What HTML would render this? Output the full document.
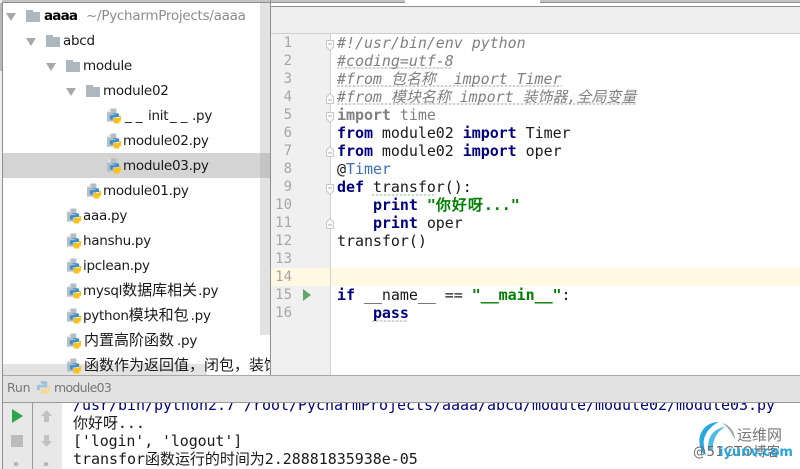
<!DOCTYPE html>
<html><head><meta charset="utf-8">
<style>
html,body{margin:0;padding:0;background:#fff}
#r{position:relative;width:800px;height:469px;overflow:hidden;background:#fff}
.b{position:absolute}
.t{position:absolute;white-space:pre;font-family:"DejaVu Sans","WenQuanYi Zen Hei",sans-serif;font-size:13.5px;line-height:20px;color:#1a1a1a;letter-spacing:-.27px}
.j{font-family:"WenQuanYi Zen Hei","Noto Sans CJK SC",sans-serif;font-size:15px;letter-spacing:0}
.c{position:absolute;left:337px;white-space:pre;font-family:"DejaVu Sans Mono","WenQuanYi Zen Hei",monospace;font-size:15px;line-height:18px;color:#1a1a1a;letter-spacing:-.05px}
.n{position:absolute;left:271px;width:21px;text-align:right;font-family:"DejaVu Sans Mono",monospace;font-size:14px;line-height:18px;color:#a6a6a6}
.k{color:#000080;font-weight:bold}
.i{color:#808080;font-style:italic}
.w{color:#808080}
.s{color:#008000;font-weight:bold}
.o{position:absolute;left:11px;white-space:pre;font-family:"DejaVu Sans Mono","WenQuanYi Zen Hei",monospace;font-size:15px;line-height:18px;color:#1a1a1a;letter-spacing:-.03px}
.tri{position:absolute;width:0;height:0;border-left:5px solid transparent;border-right:5px solid transparent;border-top:8px solid #a8a8a8}
.fd{position:absolute;width:14px;height:10px;background:#acb7bf}
.fd:before{content:"";position:absolute;left:0;top:-2px;width:7px;height:2px;background:#acb7bf}
.ul{position:absolute;height:2px;background:repeating-linear-gradient(90deg,#d4d4d4 0 2px,#f0f0f0 2px 4px)}
</style></head><body><div id="r">

<svg width="0" height="0" style="position:absolute"><defs>
<symbol id="py" viewBox="0 0 16 16">
<path d="M0 4 4 0H10V14H0Z" fill="#b4bec6"/><path d="M0 4 4 0V4Z" fill="#e4e8eb"/>
<path d="M6 5H11Q13 5 13 7V9H8Q6 9 6 11V12H5Q3 12 3 10V8Q3 7 5 7H9V6H6Z" fill="#3d8fc9"/>
<path d="M15 8V12Q15 14 13 14V16H9Q7 16 7 14V12Q7 10 9 10H13V8Z" fill="#fdc21a"/>
</symbol>
<symbol id="fdn" viewBox="0 0 8 11"><path d="M.5.5H7.5V7L4 10.5.5 7Z" fill="#fafafa" stroke="#c8c8c8"/><path d="M2 4H6" stroke="#b0b0b0"/></symbol>
<symbol id="fup" viewBox="0 0 8 11"><path d="M.5 10.5H7.5V4L4 .5.5 4Z" fill="#fafafa" stroke="#c8c8c8"/><path d="M2 7H6" stroke="#b0b0b0"/></symbol>
</defs></svg>

<!-- top -->
<div class="b" style="left:0;top:0;width:800px;height:2px;background:#c4c4c4"></div>
<div class="b" style="left:0;top:2px;width:270px;height:1px;background:#8f8f8f"></div>
<div class="b" style="left:405px;top:0;width:135px;height:3px;background:#fff"></div>
<div class="b" style="left:271px;top:3px;width:529px;height:3px;background:#fff"></div>
<div class="b" style="left:271px;top:2px;width:134px;height:1px;background:#8f8f8f"></div>
<div class="b" style="left:540px;top:2px;width:260px;height:1px;background:#8f8f8f"></div>
<div class="b" style="left:271px;top:6px;width:529px;height:1px;background:#8f8f8f"></div>
<div class="b" style="left:271px;top:7px;width:529px;height:26px;background:#eeeeee"></div>
<div class="b" style="left:271px;top:33px;width:529px;height:1px;background:#cfcfcf"></div>

<!-- left edge and splitter -->
<div class="b" style="left:0;top:0;width:2px;height:469px;background:#eeeeee"></div>
<div class="b" style="left:2px;top:2px;width:1px;height:467px;background:#8f8f8f"></div>
<div class="b" style="left:0;top:3px;width:2px;height:68px;background:#b8b8b8"></div>
<div class="b" style="left:270px;top:0;width:1px;height:375px;background:#8f8f8f"></div>

<!-- tree scrollbar -->
<div class="b" style="left:260px;top:3px;width:10px;height:332px;background:#e2e2e2"></div>
<div class="b" style="left:3px;top:153px;width:257px;height:25px;background:#d4d4d4"></div>
<div class="b" style="left:260px;top:153px;width:10px;height:25px;background:#c4c4c4"></div>
<div class="b" style="left:3px;top:364px;width:204px;height:11px;background:#e3e3e3"></div>

<!-- tree -->
<div class="tri" style="left:6px;top:13px"></div>
<div class="fd" style="left:26px;top:12px"></div>
<div class="t" style="left:44px;top:6px;font-weight:bold;color:#000;letter-spacing:-.8px">aaaa</div>
<div class="t" style="left:86px;top:6px;color:#8c8c8c">~/PycharmProjects/aaaa</div>

<div class="tri" style="left:26px;top:38px"></div>
<div class="fd" style="left:46px;top:37px"></div>
<div class="t" style="left:63px;top:31px">abcd</div>

<div class="tri" style="left:46px;top:63px"></div>
<div class="fd" style="left:66px;top:62px"></div>
<div class="t" style="left:83px;top:56px">module</div>

<div class="tri" style="left:66px;top:88px"></div>
<div class="fd" style="left:86px;top:87px"></div>
<div class="t" style="left:103px;top:81px">module02</div>

<svg class="b" style="left:107px;top:108px" width="15" height="16"><use href="#py"/></svg>
<div class="t" style="left:125px;top:106px;letter-spacing:4px">__</div>
<div class="t" style="left:148px;top:106px">init</div>
<div class="t" style="left:170px;top:106px;letter-spacing:4px">__</div>
<div class="t" style="left:192px;top:106px">.py</div>
<svg class="b" style="left:107px;top:133px" width="15" height="16"><use href="#py"/></svg>
<div class="t" style="left:123px;top:131px">module02.py</div>
<svg class="b" style="left:107px;top:158px" width="15" height="16"><use href="#py"/></svg>
<div class="t" style="left:123px;top:156px">module03.py</div>
<svg class="b" style="left:87px;top:183px" width="15" height="16"><use href="#py"/></svg>
<div class="t" style="left:103px;top:181px">module01.py</div>
<svg class="b" style="left:67px;top:208px" width="15" height="16"><use href="#py"/></svg>
<div class="t" style="left:83px;top:206px">aaa.py</div>
<svg class="b" style="left:67px;top:233px" width="15" height="16"><use href="#py"/></svg>
<div class="t" style="left:83px;top:231px">hanshu.py</div>
<svg class="b" style="left:67px;top:258px" width="15" height="16"><use href="#py"/></svg>
<div class="t" style="left:83px;top:256px">ipclean.py</div>
<svg class="b" style="left:67px;top:283px" width="15" height="16"><use href="#py"/></svg>
<div class="t" style="left:83px;top:280px">mysql<span class="j" style="margin-right:1px">数据库相关</span>.py</div>
<svg class="b" style="left:67px;top:308px" width="15" height="16"><use href="#py"/></svg>
<div class="t" style="left:83px;top:305px">python<span class="j" style="margin-right:2px">模块和包</span>.py</div>
<svg class="b" style="left:67px;top:333px" width="15" height="16"><use href="#py"/></svg>
<div class="t" style="left:84px;top:330px"><span class="j" style="margin-right:3px">内置高阶函数</span>.py</div>
<svg class="b" style="left:67px;top:358px" width="15" height="16"><use href="#py"/></svg>
<div class="t" style="left:84px;top:355px;width:186px;overflow:hidden"><span class="j">函数作为返回值，闭包，装饰器</span></div>

<!-- gutter -->
<div class="b" style="left:271px;top:34px;width:59px;height:341px;background:#f0f0f0"></div>
<div class="b" style="left:330px;top:34px;width:1px;height:341px;background:#d2d2d2"></div>
<div class="b" style="left:271px;top:268px;width:59px;height:18px;background:#fff8e3"></div>
<div class="b" style="left:331px;top:268px;width:469px;height:18px;background:#fff8e3"></div>

<div class="n" style="top:34px">1</div>
<div class="n" style="top:52px">2</div>
<div class="n" style="top:70px">3</div>
<div class="n" style="top:88px">4</div>
<div class="n" style="top:106px">5</div>
<div class="n" style="top:124px">6</div>
<div class="n" style="top:142px">7</div>
<div class="n" style="top:160px">8</div>
<div class="n" style="top:178px">9</div>
<div class="n" style="top:196px">10</div>
<div class="n" style="top:214px">11</div>
<div class="n" style="top:232px">12</div>
<div class="n" style="top:250px">13</div>
<div class="n" style="top:268px">14</div>
<div class="n" style="top:286px">15</div>
<div class="n" style="top:304px">16</div>

<svg class="b" style="left:326px;top:40px" width="8" height="11"><use href="#fdn"/></svg>
<svg class="b" style="left:326px;top:93px" width="8" height="11"><use href="#fup"/></svg>
<svg class="b" style="left:326px;top:112px" width="8" height="11"><use href="#fdn"/></svg>
<svg class="b" style="left:326px;top:146px" width="8" height="11"><use href="#fup"/></svg>
<svg class="b" style="left:326px;top:184px" width="8" height="11"><use href="#fdn"/></svg>
<svg class="b" style="left:326px;top:218px" width="8" height="11"><use href="#fup"/></svg>
<svg class="b" style="left:303px;top:288px" width="9" height="14"><path d="M0 1 8 7 0 13Z" fill="#5fa86c"/></svg>

<!-- code -->
<div class="ul" style="left:337px;top:67px;width:116px"></div>
<div class="ul" style="left:337px;top:85px;width:225px"></div>
<div class="ul" style="left:337px;top:103px;width:299px"></div>
<div class="ul" style="left:372px;top:194px;width:64px;background:repeating-linear-gradient(90deg,#c4dcc4 0 2px,#f4f8f4 2px 4px)"></div>
<div class="ul" style="left:372px;top:320px;width:36px"></div>
<div class="c i" style="top:34px">#!/usr/bin/env python</div>
<div class="c i" style="top:52px">#coding=utf-8</div>
<div class="c i" style="top:70px">#from 包名称  import Timer</div>
<div class="c i" style="top:88px">#from 模块名称 import 装饰器,全局变量</div>
<div class="c w" style="top:106px"><b>import</b> time</div>
<div class="c" style="top:124px"><span class="k">from</span> module02 <span class="k">import</span> Timer</div>
<div class="c" style="top:142px"><span class="k">from</span> module02 <span class="k">import</span> oper</div>
<div class="c" style="top:160px">@<span style="color:#3a6fb5">Timer</span></div>
<div class="c" style="top:178px"><span class="k">def</span> transfor():</div>
<div class="c" style="top:196px">    <span class="k">print</span> <span class="s">"<span style="letter-spacing:1px">你好呀</span>..."</span></div>
<div class="c" style="top:214px">    <span class="k">print</span> oper</div>
<div class="c" style="top:232px">transfor()</div>
<div class="c" style="top:286px"><span class="k">if</span> __name__ == <span class="s">"__main__"</span>:</div>
<div class="c" style="top:304px">    <span class="k">pass</span></div>

<!-- run panel -->
<div class="b" style="left:3px;top:375px;width:797px;height:1px;background:#a8a8a8"></div>
<div class="b" style="left:3px;top:376px;width:797px;height:26px;background:#e2e2e2"></div>
<div class="b" style="left:3px;top:402px;width:797px;height:1px;background:#9a9a9a"></div>
<div class="t" style="left:7px;top:378px;font-size:12.5px;color:#777;letter-spacing:-.2px">Run</div>
<svg class="b" style="left:36px;top:380px" width="15" height="15" viewBox="0 0 16 16"><path d="M5 1H10Q12 1 12 3V8H6Q4 8 4 10V11H3Q1 11 1 9V7Q1 5 3 5H8V4H5Z" fill="#9fc3dd"/><path d="M15 6V11Q15 13 13 13V15H8Q5 15 5 13V11Q5 9 7 9H13V6Z" fill="#f1dc9a"/></svg>
<div class="t" style="left:54px;top:378px;font-size:12.5px;color:#777;letter-spacing:-.7px">module03</div>

<div class="b" style="left:3px;top:403px;width:59px;height:66px;background:#e8e8e8"></div>
<div class="b" style="left:32px;top:403px;width:1px;height:66px;background:#9a9a9a"></div>
<svg class="b" style="left:11px;top:408px" width="13" height="16"><path d="M1 1 12 8 1 15Z" fill="#2ea44f"/></svg>
<div class="b" style="left:11px;top:435px;width:12px;height:12px;background:#bbbbbb"></div>
<svg class="b" style="left:40px;top:409px" width="13" height="14"><path d="M6.5 1 12 7H9V13H4V7H1Z" fill="#c2c2c2"/></svg>
<svg class="b" style="left:40px;top:434px" width="13" height="14"><path d="M4 1H9V7H12L6.5 13 1 7H4Z" fill="#c2c2c2"/></svg>
<div class="t" style="left:13px;top:459px;font-size:10px;line-height:12px;color:#888">»</div>
<div class="t" style="left:43px;top:459px;font-size:10px;line-height:12px;color:#888">»</div>

<!-- console -->
<div class="b" style="left:62px;top:403px;width:738px;height:66px;overflow:hidden">
<div class="o" style="top:-7px;color:#000080">/usr/bin/python2.7 /root/PycharmProjects/aaaa/abcd/module/module02/module03.py</div>
<div class="o" style="top:11px">你好呀...</div>
<div class="o" style="top:29px;letter-spacing:-.13px">['login', 'logout']</div>
<div class="o" style="top:47px">transfor函数运行的时间为2.28881835938e-05</div>
</div>

<!-- watermark -->
<svg class="b" style="left:695px;top:420px" width="50" height="49" viewBox="0 0 50 49"><path d="M8 33C-1 18 8 2 24 2 15 6 7 16 9 26 9 29 10 32 11 35Z" fill="#26a9e0"/><path d="M14 30C11 18 19 8 30 7 23 11 17 19 18 31Z" fill="#4cbbe8"/><path d="M27 3C35 5 40 12 40 20 37 13 33 7 27 3Z" fill="#9aa6ad"/></svg>
<div class="b" style="left:737px;top:425px;font-family:'WenQuanYi Zen Hei','Noto Sans CJK SC',sans-serif;font-size:15px;line-height:20px;color:#777;white-space:pre">运维网</div>
<div class="b" style="left:693px;top:444px;font-family:'DejaVu Sans','Noto Sans CJK SC',sans-serif;font-size:13px;line-height:18px;color:#666;white-space:pre;letter-spacing:.6px">@51CTO博客</div>
<div class="b" style="left:719px;top:444px;font-family:'DejaVu Sans',sans-serif;font-size:13px;line-height:18px;color:#2aa3dc;font-weight:bold;white-space:pre">iyunv.com</div>

</div></body></html>
